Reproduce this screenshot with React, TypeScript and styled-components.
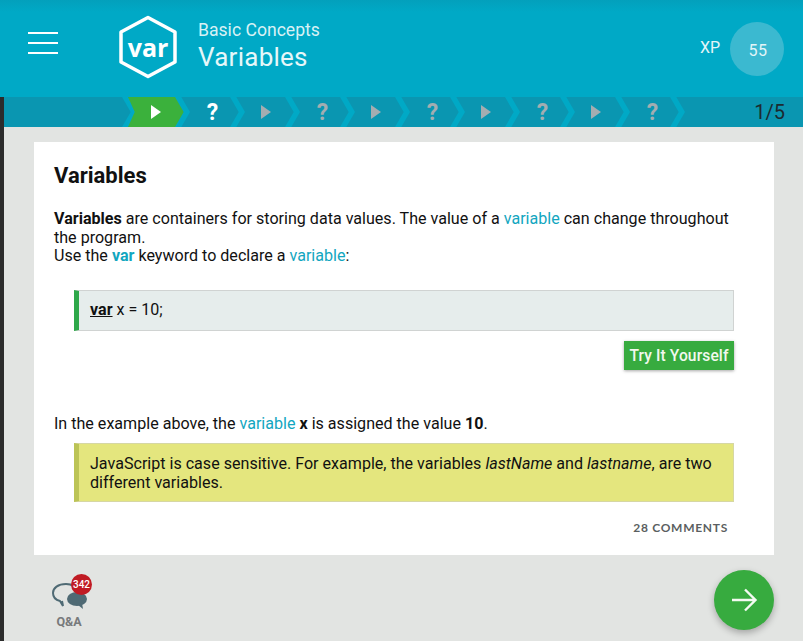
import React from "react";
import styled, { createGlobalStyle, css } from "styled-components";

const GlobalStyle = createGlobalStyle`
  html, body {
    margin: 0;
    padding: 0;
    background: #e2e4e2;
    font-family: Roboto, "Liberation Sans", sans-serif;
  }
  * { box-sizing: border-box; }
`;

const Page = styled.div`
  width: 803px;
  height: 641px;
  overflow: hidden;
  display: flex;
  flex-direction: column;
`;

const Header = styled.header`
  height: 97px;
  flex: none;
  display: flex;
  align-items: center;
  background: linear-gradient(#03a0bc 0, #00a9c6 12px, #00a9c6 100%);
  color: #fff;
  padding: 0 17px 11px 28px;
`;

const Burger = styled.div`
  width: 30px;
  display: flex;
  flex-direction: column;
  gap: 8px;
  margin-right: 60px;
  span {
    height: 2px;
    background: #fff;
  }
`;

const Badge = styled.div`
  position: relative;
  width: 60px;
  height: 64px;
  margin-top: 7px;
  margin-right: 20px;
  display: flex;
  align-items: center;
  justify-content: center;
  font-family: "Open Sans", sans-serif;
  font-weight: 700;
  font-size: 25px;
  svg {
    position: absolute;
    inset: 0;
  }
`;

const Titles = styled.div`
  flex: 1;
  margin-top: 5px;
`;

const Crumb = styled.div`
  font-size: 17.6px;
  line-height: 22px;
  color: #d8f1f5;
`;

const Title = styled.div`
  font-size: 26px;
  line-height: 32px;
  letter-spacing: 0.25px;
  color: #e6f7f9;
`;

const XpLabel = styled.span`
  font-size: 16px;
  margin-right: 10px;
  color: #e3f5f8;
  margin-top: 9px;
`;

const XpCircle = styled.div`
  width: 54px;
  height: 54px;
  border-radius: 50%;
  background: #3bb9d0;
  color: #e3f5f8;
  font-size: 16px;
  letter-spacing: 0.5px;
  display: flex;
  align-items: center;
  justify-content: center;
  padding: 3px 0 0 2px;
  margin-top: 11px;
  margin-right: 2px;
`;

const Body = styled.div`
  flex: 1;
  min-height: 0;
  display: flex;
  flex-direction: column;
  border-left: 4px solid #2c2c2c;
`;

const Progress = styled.div`
  height: 30px;
  flex: none;
  display: flex;
  align-items: center;
  background: #0a96b1;
  padding-left: 124px;
  overflow: hidden;
`;

const chevron = css`
  content: "";
  position: absolute;
  top: 0;
  width: 15px;
  height: 30px;
  background: #00a9c6;
  clip-path: polygon(0 0, 42% 0, 100% 50%, 42% 100%, 0 100%, 58% 50%);
`;

const LeadChevron = styled.div`
  position: relative;
  width: 0;
  height: 30px;
  flex: none;
  &::after {
    ${chevron}
    left: -6px;
  }
`;

const Step = styled.div<{ $active?: boolean }>`
  position: relative;
  width: 55px;
  height: 30px;
  flex: none;
  display: flex;
  align-items: center;
  justify-content: center;
  &::before {
    content: "";
    position: absolute;
    inset: 0 -1px 0 0;
    background: ${({ $active }) => ($active ? "#3bb13c" : "transparent")};
    clip-path: polygon(88% 0, 100% 50%, 88% 100%, 0 100%, 12% 50%, 0 0);
  }
  &::after {
    ${chevron}
    right: -7px;
  }
`;

const Play = styled.span<{ $on?: boolean }>`
  position: relative;
  width: 0;
  height: 0;
  border-left: 10px solid ${({ $on }) => ($on ? "#fff" : "#a3adb1")};
  border-top: 7px solid transparent;
  border-bottom: 7px solid transparent;
`;

const Quiz = styled.span<{ $on?: boolean }>`
  position: relative;
  left: 2px;
  font-size: 23px;
  font-weight: 700;
  color: ${({ $on }) => ($on ? "#fff" : "#a3adb1")};
`;

const Count = styled.div`
  margin-left: auto;
  padding-right: 18px;
  font-size: 20px;
  color: #1c2a30;
`;

const Content = styled.main`
  flex: 1;
  min-height: 0;
  display: flex;
  flex-direction: column;
  padding: 15px 29px 0 30px;
`;

const Card = styled.section`
  height: 413px;
  flex: none;
  background: #fff;
  padding: 21px 40px 0 20px;
  color: #111;
  font-size: 16.08px;
  line-height: 18.6px;
`;

const Heading = styled.h2`
  margin: 0 0 21px;
  font-size: 22px;
  line-height: 26px;
  font-weight: 700;
`;

const Paragraph = styled.p`
  margin: 0;
`;

const AfterExample = styled(Paragraph)`
  margin-top: 45px;
`;

const Term = styled.span`
  color: #12a6c0;
`;

const CodeBlock = styled.div`
  margin: 24px 0 0 20px;
  height: 41px;
  display: flex;
  align-items: center;
  padding: 1px 0 0 11px;
  background: #e6edec;
  border: 1px solid #d0d3d2;
  border-left: 5px solid #2ea84a;
  u { font-weight: 700; }
`;

const TryRow = styled.div`
  display: flex;
  justify-content: flex-end;
  margin-top: 10px;
`;

const TryButton = styled.button`
  height: 29px;
  width: 110px;
  padding: 1px 0 0;
  border: 0;
  background: #37ab3f;
  color: #f2f8ee;
  font-family: inherit;
  font-size: 15.6px;
  font-weight: 500;
  letter-spacing: 0.1px;
  box-shadow: 0 1px 3px rgba(0, 0, 0, 0.35);
`;

const Note = styled.div`
  margin: 10px 0 0 20px;
  padding: 10px 15px 0 11px;
  height: 59px;
  line-height: 19px;
  background: #e4e67e;
  border: 1px solid #d6d7a4;
  border-left: 5px solid #bcc456;
`;

const Comments = styled.div`
  margin: 17px 6px 0 0;
  text-align: right;
  font-family: Lato, sans-serif;
  font-size: 12px;
  font-weight: 700;
  letter-spacing: 0.72px;
  color: #5b5f61;
`;

const Footer = styled.div`
  flex: 1;
  display: flex;
  justify-content: space-between;
  padding: 15px 0 0 15px;
`;

const QnA = styled.div`
  position: relative;
  width: 40px;
  display: flex;
  flex-direction: column;
  align-items: center;
  padding-top: 11px;
  color: #77797b;
  font-size: 12.5px;
  font-weight: 700;
`;

const Bubbles = styled.svg`
  display: block;
  margin-bottom: 3px;
`;

const Count342 = styled.span`
  position: absolute;
  top: 4px;
  left: 22px;
  width: 21px;
  height: 21px;
  border-radius: 50%;
  background: #c01b24;
  color: #fff;
  font-size: 10px;
  font-weight: 500;
  line-height: 21px;
  text-align: center;
`;

const Next = styled.button`
  width: 60px;
  height: 60px;
  padding: 0;
  border: 0;
  border-radius: 50%;
  background: #37ab3f;
  display: flex;
  align-items: center;
  justify-content: center;
  box-shadow: 0 3px 7px rgba(0, 0, 0, 0.28);
`;

const steps = [0, 1, 2, 3, 4, 5, 6, 7, 8, 9];

export default function App() {
  return (
    <Page>
      <GlobalStyle />
      <Header>
        <Burger>
          <span />
          <span />
          <span />
        </Burger>
        <Badge>
          <svg width="60" height="64" viewBox="0 0 60 64" fill="none">
            <path d="M30 2.5 L57 17 V47 L30 61.5 L3 47 V17 Z" stroke="#fff" strokeWidth="3.5" strokeLinejoin="round" />
          </svg>
          var
        </Badge>
        <Titles>
          <Crumb>Basic Concepts</Crumb>
          <Title>Variables</Title>
        </Titles>
        <XpLabel>XP</XpLabel>
        <XpCircle>55</XpCircle>
      </Header>
      <Body>
        <Progress>
          <LeadChevron />
          {steps.map((i) => (
            <Step key={i} $active={i === 0}>
              {i % 2 === 0 ? <Play $on={i === 0} /> : <Quiz $on={i === 1}>?</Quiz>}
            </Step>
          ))}
          <Count>1/5</Count>
        </Progress>
        <Content>
          <Card>
            <Heading>Variables</Heading>
            <Paragraph>
              <b>Variables</b> are containers for storing data values. The value of a <Term>variable</Term> can change
              throughout the program.
              <br />
              Use the <Term><b>var</b></Term> keyword to declare a <Term>variable</Term>:
            </Paragraph>
            <CodeBlock>
              <span>
                <u>var</u> x = 10;
              </span>
            </CodeBlock>
            <TryRow>
              <TryButton>Try It Yourself</TryButton>
            </TryRow>
            <AfterExample>
              In the example above, the <Term>variable</Term> <b>x</b> is assigned the value <b>10</b>.
            </AfterExample>
            <Note>
              JavaScript is case sensitive. For example, the variables <i>lastName</i> and <i>lastname</i>, are two
              different variables.
            </Note>
            <Comments>28 COMMENTS</Comments>
          </Card>
          <Footer>
            <QnA>
              <Bubbles width="36" height="30" viewBox="0 0 36 30" fill="none">
                <path d="M15 3 C7 3 2 7 2 12 C2 16 5 19 9 20 L12 25 L11 20" stroke="#4f6a74" strokeWidth="2" />
                <path d="M15 3 C18 3 21 4 22 5" stroke="#4f6a74" strokeWidth="2" />
                <ellipse cx="26" cy="18" rx="10" ry="7" fill="#4f6a74" />
                <path d="M27 24 L32 28 L31 22 Z" fill="#4f6a74" />
              </Bubbles>
              Q&amp;A
              <Count342>342</Count342>
            </QnA>
            <Next aria-label="next">
              <svg width="28" height="28" viewBox="0 0 28 28" fill="none" stroke="#f4faf2" strokeWidth="2.4">
                <path d="M2 14 H25 M15 3.5 L25.5 14 L15 24.5" />
              </svg>
            </Next>
          </Footer>
        </Content>
      </Body>
    </Page>
  );
}
